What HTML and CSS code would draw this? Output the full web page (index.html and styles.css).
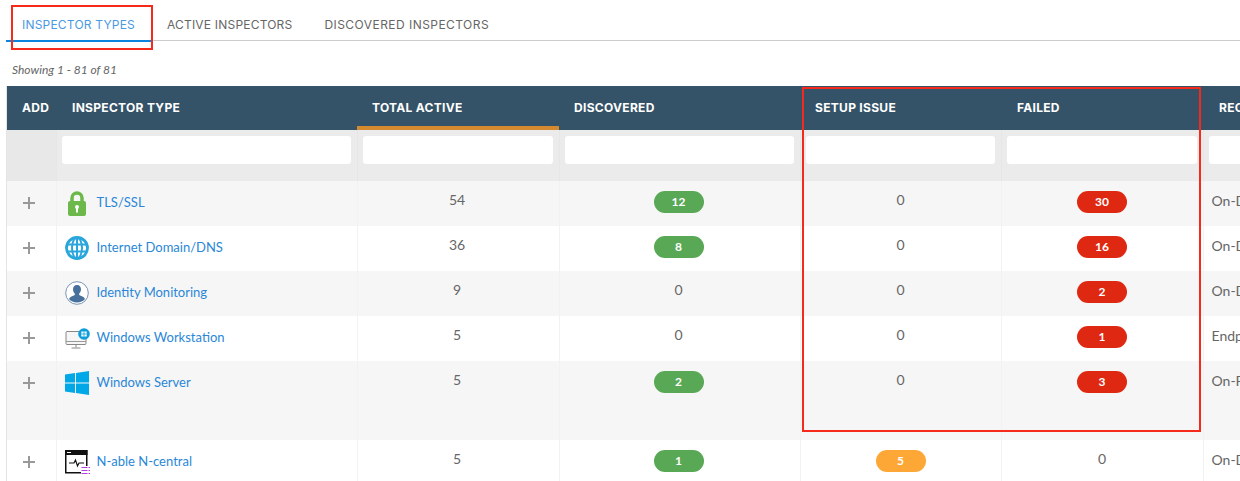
FILE: index.html
```html
<!DOCTYPE html>
<html lang="en">
    <head>
        <meta charset="UTF-8" />
        <meta name="viewport" content="width=device-width, initial-scale=1.0" />
        <title>Inspectors</title>
        <link rel="stylesheet" href="styles.css">
    </head>
    <body>
        <nav class="tabs">
            <a class="tab active">INSPECTOR TYPES</a>
            <a class="tab">ACTIVE INSPECTORS</a>
            <a class="tab">DISCOVERED INSPECTORS</a>
        </nav>
        <p class="showing">Showing 1 - 81 of 81</p>
        <div class="table-wrap">
            <table class="grid">
                <colgroup>
                    <col class="col-add"><col class="col-type"><col class="col-total"><col class="col-disc"><col class="col-setup"><col class="col-failed"><col class="col-rec">
                </colgroup>
                <thead>
                    <tr class="head">
                        <th>ADD</th>
                        <th>INSPECTOR TYPE</th>
                        <th class="sorted">TOTAL ACTIVE</th>
                        <th>DISCOVERED</th>
                        <th>SETUP ISSUE</th>
                        <th>FAILED</th>
                        <th>RECOMMENDED</th>
                    </tr>
                    <tr class="filters">
                        <td class="no-filter"></td>
                        <td><input type="text"></td>
                        <td><input type="text"></td>
                        <td><input type="text"></td>
                        <td><input type="text"></td>
                        <td><input type="text"></td>
                        <td><input type="text"></td>
                    </tr>
                </thead>
                <tbody>
                    <tr>
                        <td class="add"></td>
                        <td><div class="type">
                            <svg class="icon" viewBox="0 0 24 24"><path d="M7 12V7a5 5 0 0 1 10 0V12" fill="none" stroke="#6cb84a" stroke-width="3.500"/><rect x="3" y="10" width="18" height="15" rx="2" fill="#6cb84a"/><circle cx="12" cy="16" r="2" fill="#fff"/><rect x="11" y="16.500" width="2" height="5" fill="#fff"/></svg>
                            <a>TLS/SSL</a>
                        </div></td>
                        <td class="num">54</td>
                        <td class="num"><span class="pill green">12</span></td>
                        <td class="num">0</td>
                        <td class="num"><span class="pill red">30</span></td>
                        <td class="rec">On-Demand</td>
                    </tr>
                    <tr>
                        <td class="add"></td>
                        <td><div class="type">
                            <svg class="icon" viewBox="0 0 24 24"><circle cx="12" cy="12" r="10.500" fill="none" stroke="#2aa6dd" stroke-width="2.800"/><ellipse cx="12" cy="12" rx="5" ry="10.500" fill="none" stroke="#2aa6dd" stroke-width="2"/><path d="M12 1.500v21M2 8.500h20M2 15.500h20" stroke="#2aa6dd" stroke-width="2"/></svg>
                            <a>Internet Domain/DNS</a>
                        </div></td>
                        <td class="num">36</td>
                        <td class="num"><span class="pill green">8</span></td>
                        <td class="num">0</td>
                        <td class="num"><span class="pill red">16</span></td>
                        <td class="rec">On-Demand</td>
                    </tr>
                    <tr>
                        <td class="add"></td>
                        <td><div class="type">
                            <svg class="icon" viewBox="0 0 24 24"><circle cx="12" cy="12" r="11.300" fill="#fff" stroke="#7a96b5" stroke-width="1"/><path d="M12 4c-2.600 0-4 2-4 4.300 0 1.800.8 3.300 1.800 4.300v1.500c-1.800 1-5 1.500-5.800 3.900 1.700 2.300 4.700 3.500 8 3.500s6.300-1.200 8-3.500c-.8-2.400-4-2.900-5.800-3.900v-1.500c1-1 1.800-2.500 1.800-4.300C16 6 14.600 4 12 4z" fill="#47709c"/></svg>
                            <a>Identity Monitoring</a>
                        </div></td>
                        <td class="num">9</td>
                        <td class="num">0</td>
                        <td class="num">0</td>
                        <td class="num"><span class="pill red">2</span></td>
                        <td class="rec">On-Demand</td>
                    </tr>
                    <tr>
                        <td class="add"></td>
                        <td><div class="type">
                            <svg class="icon" viewBox="0 0 24 24"><rect x="1" y="5.500" width="20" height="13" rx="1" fill="#f6f6f6" stroke="#888"/><path d="M1 15.500h20" stroke="#999"/><path d="M11 19v2.500M6.500 22h9" stroke="#888"/><circle cx="19" cy="8" r="5.800" fill="#0d9ddb"/><path d="M16.300 5.500h5.400v5h-5.400z" fill="#fff"/><path d="M19 5.500v5M16.300 8h5.400" stroke="#0d9ddb" stroke-width="0.800"/></svg>
                            <a>Windows Workstation</a>
                        </div></td>
                        <td class="num">5</td>
                        <td class="num">0</td>
                        <td class="num">0</td>
                        <td class="num"><span class="pill red">1</span></td>
                        <td class="rec">Endpoint</td>
                    </tr>
                    <tr class="tall">
                        <td class="add"></td>
                        <td><div class="type">
                            <svg class="icon" viewBox="0 0 24 24"><path d="M0 3.600l10-1.500v9.300H0zM11 2l13-2v11.400H11zM0 12.500h10v9.400L0 20.400zM11 12.500h13V24l-13-2z" fill="#00a8e8"/></svg>
                            <a>Windows Server</a>
                        </div></td>
                        <td class="num">5</td>
                        <td class="num"><span class="pill green">2</span></td>
                        <td class="num">0</td>
                        <td class="num"><span class="pill red">3</span></td>
                        <td class="rec">On-Premises</td>
                    </tr>
                    <tr>
                        <td class="add"></td>
                        <td><div class="type">
                            <svg class="icon" viewBox="0 0 24 24"><rect x="0.750" y="0.750" width="21" height="22" fill="#fff" stroke="#111" stroke-width="1.500"/><rect x="0" y="0" width="22.500" height="5" fill="#111"/><path d="M2 2.500h4" stroke="#fff"/><path d="M4 13h5l1.500-3 2 6 1.500-3h5" fill="none" stroke="#111" stroke-width="1.200"/><rect x="16" y="16" width="10" height="9" fill="#fff"/><path d="M16.500 17.500h6M23.500 17.500h1.500M16.500 20.500h6M23.500 20.500h1.500M16.500 23.500h6M23.500 23.500h1.500" stroke="#b63fe0" stroke-width="1.200"/></svg>
                            <a>N-able N-central</a>
                        </div></td>
                        <td class="num">5</td>
                        <td class="num"><span class="pill green">1</span></td>
                        <td class="num"><span class="pill orange">5</span></td>
                        <td class="num">0</td>
                        <td class="rec">On-Demand</td>
                    </tr>
                </tbody>
            </table>
        </div>
        <div class="callout callout-tab"></div>
        <div class="callout callout-cols"></div>
    </body>
</html>
```

FILE: styles.css
```css
html,
body {
    height: 481px;
    overflow: hidden;
}

body {
    margin: 0;
    position: relative;
    background: white;
    color: #666;
    font-family: "Lato", sans-serif;
    font-size: 14px;
}

.tabs {
    display: flex;
    height: 40px;
    margin-left: 6px;
    border-bottom: 1px solid #ccc;
}

.tab {
    padding: 17px 16px 0;
    font-family: "Inter", sans-serif;
    font-size: 12px;
    letter-spacing: 0.2px;
    color: #666;
}

.tab:last-child {
    letter-spacing: 0.45px;
}

.tab.active {
    height: 23px;
    color: #4a9ae0;
    border-bottom: 2px solid #0a84dc;
    margin-bottom: -1px;
}

.showing {
    margin: 0;
    padding: 21px 12px 0;
    height: 24px;
    font-size: 12px;
    font-style: italic;
}

.table-wrap {
    margin-left: 6px;
    border-left: 1px solid #e4e4e4;
    overflow: hidden;
}

.grid {
    width: 1340px;
    table-layout: fixed;
    border-collapse: collapse;
}

.col-add { width: 49px; }
.col-type { width: 301px; }
.col-total { width: 202px; }
.col-disc { width: 241px; }
.col-setup { width: 201px; }
.col-failed { width: 202px; }
.col-rec { width: 144px; }

.head {
    height: 44px;
    background: #345268;
    color: white;
}

.head th {
    padding: 0 0 2px 15px;
    text-align: left;
    font-family: "Inter", sans-serif;
    font-size: 12px;
    font-weight: 700;
    letter-spacing: 0.3px;
    white-space: nowrap;
}

.head th:nth-child(2),
.head th:nth-child(6),
.head th:nth-child(7) {
    padding-left: 16px;
}

.head th.sorted {
    box-shadow: inset 0 -4px 0 #d68a30;
}

.filters {
    height: 51px;
    background: #ebebeb;
}

.filters td {
    padding: 0 6px 11px 5px;
    border-left: 1px solid #e6e6e6;
}

.filters td.no-filter {
    background: #e8e8e8;
    border-left: none;
}

.filters input {
    display: block;
    box-sizing: border-box;
    width: 100%;
    height: 28px;
    border: none;
    border-radius: 3px;
    background: white;
}

tbody tr {
    height: 45px;
    background: white;
}

tbody tr:nth-child(odd) {
    background: #f6f6f6;
}

tbody tr.tall {
    height: 79px;
}

tbody td {
    padding: 10px 6px 0;
    vertical-align: top;
    border-left: 1px solid #f2f2f2;
    line-height: 20px;
}

tbody td:first-child {
    border-left: none;
}

.add {
    position: relative;
}

.add::before {
    content: "";
    position: absolute;
    left: 16px;
    top: 21px;
    width: 12px;
    height: 2px;
    background: #999;
}

.add::after {
    content: "";
    position: absolute;
    left: 21px;
    top: 16px;
    width: 2px;
    height: 12px;
    background: #999;
}

.type {
    display: flex;
    align-items: flex-start;
    gap: 8px;
    padding-left: 2px;
    font-size: 13px;
}

.type a {
    color: #2a87d8;
    line-height: 22px;
}

.icon {
    flex: none;
    width: 24px;
    height: 24px;
    overflow: visible;
}

tbody td.num {
    padding-top: 9px;
    text-align: center;
}

tbody td:nth-child(3),
tbody td:nth-child(4) {
    padding-right: 8px;
}

tbody td.rec {
    padding-left: 8px;
}

.pill {
    display: inline-block;
    vertical-align: top;
    margin-top: 1px;
    width: 50px;
    height: 22px;
    border-radius: 11px;
    color: white;
    font-size: 12px;
    font-weight: 700;
    line-height: 22px;
}

.green { background: #58a855; }
.red { background: #df2812; }
.orange { background: #fda737; }

.callout {
    position: absolute;
    box-sizing: border-box;
    border: 2px solid #f52a1a;
}

.callout-tab {
    left: 11px;
    top: 5px;
    width: 142px;
    height: 45px;
}

.callout-cols {
    left: 802px;
    top: 87px;
    width: 399px;
    height: 345px;
}
```
